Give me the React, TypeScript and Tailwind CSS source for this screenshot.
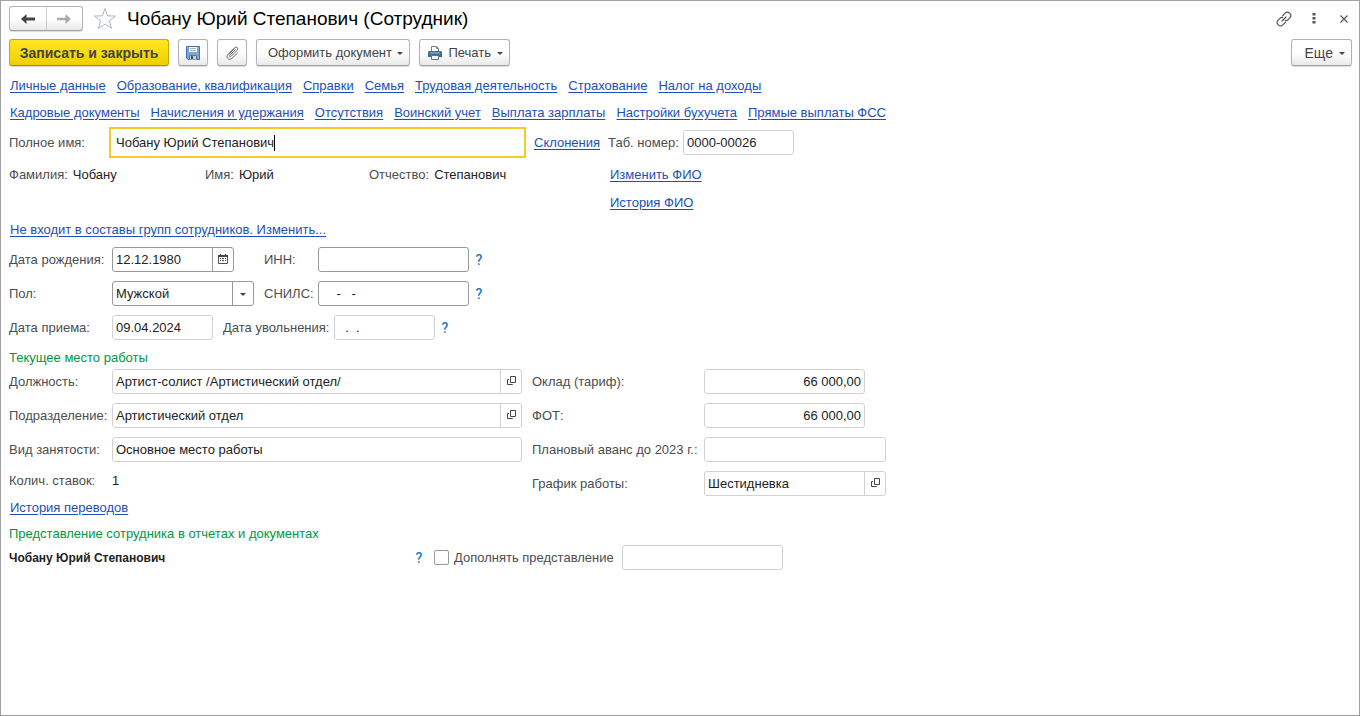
import { useId, type ReactNode } from "react";

const personalLinks = [
  "Личные данные",
  "Образование, квалификация",
  "Справки",
  "Семья",
  "Трудовая деятельность",
  "Страхование",
  "Налог на доходы",
];

const staffLinks = [
  "Кадровые документы",
  "Начисления и удержания",
  "Отсутствия",
  "Воинский учет",
  "Выплата зарплаты",
  "Настройки бухучета",
  "Прямые выплаты ФСС",
];

const buttonLook =
  "flex items-center rounded-[3px] border border-[#b3b3b3] border-b-[#a0a0a0] bg-linear-to-b from-white from-50% to-[#e9e9e9] text-[#444] shadow-[0_1px_1px_#00000026]";

function Link({ children }: { children: ReactNode }) {
  return (
    <a href="#" className="whitespace-nowrap text-[#1c50b8] underline underline-offset-2">
      {children}
    </a>
  );
}

function Help() {
  return (
    <button type="button" aria-label="Справка" className="ml-1.5 w-2 text-center font-[Roboto,sans-serif] text-sm font-medium text-[#1a7cc7]">
      ?
    </button>
  );
}

function Caret() {
  return (
    <svg width="6" height="3" viewBox="0 0 6 3" className="mt-0.5" aria-hidden="true">
      <path d="M0 0h6L3 3z" fill="#444" />
    </svg>
  );
}

function OpenIcon() {
  return (
    <svg width="9" height="9" viewBox="0 0 9 9" fill="none" stroke="#444" aria-hidden="true">
      <path d="M3.500 .5h5v6h-5z" />
      <path d="M2 3.500H.5v5h5V8" />
    </svg>
  );
}

function CalendarIcon() {
  return (
    <svg width="10" height="10" viewBox="0 0 10 10" aria-hidden="true">
      <path d="M.5 2v7.500h9V2" fill="none" stroke="#555" />
      <path d="M0 1h10v2H0z" fill="#444" />
      <path d="M2 0h1v2H2zM7 0h1v2H7z" fill="#444" />
      <path d="M2 4h1v1H2zM4 4h2v1H4zM7 4h1v1H7zM2 6h1v1H2zM4 6h2v1H4zM7 6h1v1H7z" fill="#444" />
    </svg>
  );
}

type FieldProps = {
  label: string;
  value?: string;
  labelClass: string;
  boxClass: string;
  strong?: boolean;
  right?: boolean;
  action?: ReactNode;
  actionLabel?: string;
};

function Field({ label, value = "", labelClass, boxClass, strong, right, action, actionLabel }: FieldProps) {
  const id = useId();
  const tone = strong ? "border-[#999]" : "border-[#d2d2d2]";
  return (
    <div className="flex h-[25px] items-center">
      <label htmlFor={id} className={`shrink-0 whitespace-nowrap ${labelClass}`}>
        {label}
      </label>
      <div className={`flex h-[25px] shrink-0 rounded-[3px] border bg-white ${tone} ${boxClass}`}>
        <input
          id={id}
          defaultValue={value}
          className={`min-w-0 flex-1 whitespace-pre bg-transparent px-[3px] text-[#222] outline-none ${right ? "text-right" : ""}`}
        />
        {action && (
          <button
            type="button"
            aria-label={actionLabel}
            className={`flex w-[21px] items-start justify-center border-l pt-1.5 ${tone}`}
          >
            {action}
          </button>
        )}
      </div>
    </div>
  );
}

function Header() {
  return (
    <header className="flex h-[35px] items-center">
      <div className={`h-[25px] w-[74px] ${buttonLook}`}>
        <button type="button" aria-label="Назад" className="flex h-full flex-1 items-center justify-center border-r border-[#ccc]">
          <svg width="14" height="10" viewBox="0 0 14 10" aria-hidden="true">
            <path d="M0 5 5.500 0v3.500H14v3H5.500V10z" fill="#444" />
          </svg>
        </button>
        <button type="button" aria-label="Вперед" className="flex h-full flex-1 items-center justify-center">
          <svg width="14" height="10" viewBox="0 0 14 10" aria-hidden="true">
            <path d="M14 5 8.500 0v3.700H0v2.600h8.500V10z" fill="#aaa" />
          </svg>
        </button>
      </div>
      <button type="button" aria-label="В избранное" className="ml-2.5">
        <svg width="24" height="23" viewBox="0 0 24 23" fill="none" stroke="#aeb4bb" aria-hidden="true">
          <path d="m12 1.500 2.700 7.300 7.800.3-6.100 4.800 2.100 7.500-6.500-4.300-6.500 4.300 2.100-7.500L1.500 9.100l7.800-.3z" />
        </svg>
      </button>
      <h1 className="ml-2.5 text-[19px] text-black">Чобану Юрий Степанович (Сотрудник)</h1>
      <div className="ml-auto flex items-center">
        <button type="button" aria-label="Получить ссылку">
          <svg width="16" height="16" viewBox="0 0 16 16" fill="none" stroke="#555" strokeWidth="1.200" strokeLinecap="round" aria-hidden="true">
            <path d="m6.500 4.800 2.900-2.900a2.800 2.800 0 0 1 4 0l.7.700a2.800 2.800 0 0 1 0 4l-2.200 2.200a2.800 2.800 0 0 1-2.700.6" />
            <path d="m9.500 11.200-2.900 2.900a2.800 2.800 0 0 1-4 0l-.7-.7a2.800 2.800 0 0 1 0-4l2.200-2.200a2.800 2.800 0 0 1 2.700-.6" />
            <path d="m6 10 4-4" />
          </svg>
        </button>
        <button type="button" aria-label="Меню" className="ml-5">
          <svg width="4" height="11" viewBox="0 0 4 11" fill="#555" aria-hidden="true">
            <path d="M.5 0h3v2.500h-3zM.5 4h3v2.500h-3zM.5 8h3v2.500h-3z" />
          </svg>
        </button>
        <button type="button" aria-label="Закрыть" className="mr-[3px] ml-6">
          <svg width="8" height="8" viewBox="0 0 8 8" stroke="#555" strokeWidth="1.200" aria-hidden="true">
            <path d="m.5.5 7 7M7.500.5l-7 7" />
          </svg>
        </button>
      </div>
    </header>
  );
}

function Toolbar() {
  return (
    <div className="mt-[3px] flex h-[27px]">
      <button
        type="button"
        className="w-40 rounded-[3px] border border-[#c9a800] border-b-[#a88c00] bg-linear-to-b from-[#ffe61f] to-[#efcf00] text-sm font-bold text-[#444] shadow-[0_1px_1px_#00000026]"
      >
        Записать и закрыть
      </button>
      <button type="button" aria-label="Записать" className={`ml-[9px] w-[30px] justify-center ${buttonLook}`}>
        <svg width="14" height="14" viewBox="0 0 14 14" aria-hidden="true">
          <path d="M.5.5h13v13H2L.5 12z" fill="#7aa7d6" stroke="#4474a6" />
          <path d="M3 1h8v5H3z" fill="#fff" />
          <path d="M4 2.500h6M4 4.500h6" stroke="#a3b4c6" />
          <path d="M3 9h8v4.500H3z" fill="#c9cfd6" />
          <path d="M3.500 13.500v-4h7v4" fill="none" stroke="#5c7690" />
          <path d="M5 10h2v3H5z" fill="#3c5268" />
        </svg>
      </button>
      <button type="button" aria-label="Файлы" className={`ml-[9px] w-[30px] justify-center ${buttonLook}`}>
        <svg width="14" height="14" viewBox="0 0 14 14" fill="none" stroke="#666" strokeLinecap="round" aria-hidden="true">
          <path d="m10.500 3.500-5.700 5.700c-.9.900.3 2.100 1.200 1.200l5.800-5.800C14.200 2.200 11.700-.2 9.300 2.100L3.100 8.200c-3.100 3.100 1.100 7 4.100 4l5.200-5.200M9 3 3.900 8.100" />
        </svg>
      </button>
      <button type="button" className={`ml-[9px] w-[154px] justify-end gap-[5px] pr-1.5 ${buttonLook}`}>
        Оформить документ
        <Caret />
      </button>
      <button type="button" className={`ml-[9px] w-[91px] justify-end gap-1.5 pr-1.5 ${buttonLook}`}>
        <svg width="14" height="14" viewBox="0 0 14 14" aria-hidden="true">
          <path d="M3.500 6V.5h5l2 2V6" fill="#fff" stroke="#6d8399" />
          <path d="M8.500.5v2h2" fill="none" stroke="#6d8399" />
          <path d="M1 5h12l1 1v5H0V6z" fill="#3f6c97" />
          <path d="M2 7h10" stroke="#a9c2da" />
          <path d="M3.500 9.500h7v4h-7z" fill="#fff" stroke="#5f7890" />
        </svg>
        Печать
        <Caret />
      </button>
      <button type="button" className={`mr-[-1px] ml-auto w-[61px] justify-end gap-1.5 pr-1.5 text-sm ${buttonLook}`}>
        Еще
        <Caret />
      </button>
    </div>
  );
}

function LinkRow({ items }: { items: string[] }) {
  return (
    <nav className="flex h-[27px] items-center gap-[11px] pl-px">
      {items.map((item) => (
        <Link key={item}>{item}</Link>
      ))}
    </nav>
  );
}

function Pair({ name, value, className }: { name: string; value: string; className: string }) {
  return (
    <div className={`flex gap-[5px] ${className}`}>
      <span>{name}</span>
      <span className="text-[#222]">{value}</span>
    </div>
  );
}

export default function App() {
  return (
    <main className="flex min-h-screen flex-col border border-[#a0a0a0] bg-white px-2 font-['Liberation_Sans',Arial,sans-serif] text-[13px] leading-4 text-[#4d4d4d]">
      <Header />
      <Toolbar />
      <div className="mt-1.5">
        <LinkRow items={personalLinks} />
        <LinkRow items={staffLinks} />
      </div>

      <div className="mt-px flex h-[31px] items-center">
        <label htmlFor="full-name" className="w-[100px]">
          Полное имя:
        </label>
        <div className="relative h-[31px] w-[417px] border-2 border-[#fbc926]">
          <input
            id="full-name"
            defaultValue="Чобану Юрий Степанович"
            className="h-full w-full px-[5px] text-[#222] outline-none"
          />
          <span className="absolute top-1.5 left-[163px] h-4 w-px bg-black" />
        </div>
        <div className="mr-2 ml-2">
          <Link>Склонения</Link>
        </div>
        <Field label="Таб. номер:" value="0000-00026" labelClass="w-[75px]" boxClass="w-[111px]" />
      </div>

      <div className="mt-[3px] flex h-7 items-center">
        <Pair name="Фамилия:" value="Чобану" className="w-[196px]" />
        <Pair name="Имя:" value="Юрий" className="w-[164px]" />
        <Pair name="Отчество:" value="Степанович" className="w-[241px]" />
        <Link>Изменить ФИО</Link>
      </div>
      <div className="flex h-7 items-center pl-[601px]">
        <Link>История ФИО</Link>
      </div>
      <div className="flex h-[26px] items-center pl-px">
        <Link>Не входит в составы групп сотрудников. Изменить...</Link>
      </div>

      <section className="mt-1 flex flex-col gap-[9px]">
        <div className="flex items-center">
          <div className="w-[255px]">
            <Field
              label="Дата рождения:"
              value="12.12.1980"
              labelClass="w-[103px]"
              boxClass="w-[122px]"
              strong
              action={<CalendarIcon />}
              actionLabel="Выбрать дату"
            />
          </div>
          <Field label="ИНН:" labelClass="w-[54px]" boxClass="w-[151px]" strong />
          <Help />
        </div>
        <div className="flex items-center">
          <div className="flex w-[255px] items-center">
            <label htmlFor="sex" className="w-[103px]">
              Пол:
            </label>
            <div className="relative flex h-[25px] w-[142px] rounded-[3px] border border-[#999]">
              <select id="sex" defaultValue="Мужской" className="w-full appearance-none bg-transparent px-[3px] text-[#222] outline-none">
                <option>Мужской</option>
                <option>Женский</option>
              </select>
              <span className="pointer-events-none absolute inset-y-0 right-0 flex w-[21px] items-center justify-center border-l border-[#999]">
                <Caret />
              </span>
            </div>
          </div>
          <Field label="СНИЛС:" value={"    -   -"} labelClass="w-[54px]" boxClass="w-[151px]" strong />
          <Help />
        </div>
        <div className="flex items-center">
          <div className="w-[214px]">
            <Field label="Дата приема:" value="09.04.2024" labelClass="w-[103px]" boxClass="w-[101px]" />
          </div>
          <Field label="Дата увольнения:" value="  .  ." labelClass="w-[111px]" boxClass="w-[101px]" />
          <Help />
        </div>
      </section>

      <h2 className="mt-1.5 flex h-[23px] items-center text-[#009646]">Текущее место работы</h2>
      <div className="flex gap-2.5">
        <div className="flex w-[513px] flex-col">
          <div className="flex flex-col gap-[9px]">
            <Field
              label="Должность:"
              value="Артист-солист /Артистический отдел/"
              labelClass="w-[103px]"
              boxClass="w-[410px]"
              action={<OpenIcon />}
              actionLabel="Открыть должность"
            />
            <Field
              label="Подразделение:"
              value="Артистический отдел"
              labelClass="w-[103px]"
              boxClass="w-[410px]"
              action={<OpenIcon />}
              actionLabel="Открыть подразделение"
            />
            <Field label="Вид занятости:" value="Основное место работы" labelClass="w-[103px]" boxClass="w-[410px]" />
          </div>
          <div className="mt-[5px] flex h-[27px] items-center">
            <span className="w-[103px]">Колич. ставок:</span>
            <span className="text-[#222]">1</span>
          </div>
          <div className="flex h-[27px] items-center pl-px">
            <Link>История переводов</Link>
          </div>
        </div>
        <div className="flex flex-col gap-[9px]">
          <Field label="Оклад (тариф):" value="66 000,00" labelClass="w-[172px]" boxClass="w-[161px]" right />
          <Field label="ФОТ:" value="66 000,00" labelClass="w-[172px]" boxClass="w-[161px]" right />
          <Field label="Плановый аванс до 2023 г.:" labelClass="w-[172px]" boxClass="w-[182px]" />
          <Field
            label="График работы:"
            value="Шестидневка"
            labelClass="w-[172px]"
            boxClass="w-[182px]"
            action={<OpenIcon />}
            actionLabel="Открыть график"
          />
        </div>
      </div>

      <h2 className="mt-px flex h-[23px] items-center text-[#009646]">Представление сотрудника в отчетах и документах</h2>
      <div className="flex h-[25px] items-center">
        <strong className="w-[400px] text-xs text-[#222]">Чобану Юрий Степанович</strong>
        <Help />
        <label className="ml-[11px] flex w-[188px] items-center gap-[5px]">
          <input type="checkbox" className="h-[15px] w-[15px] appearance-none rounded-xs border border-[#999] bg-white checked:bg-[#fbc926]" />
          Дополнять представление
        </label>
        <input
          aria-label="Дополнение представления"
          className="h-[25px] w-[161px] rounded-[3px] border border-[#d2d2d2] px-[3px] text-[#222] outline-none"
        />
      </div>
    </main>
  );
}
